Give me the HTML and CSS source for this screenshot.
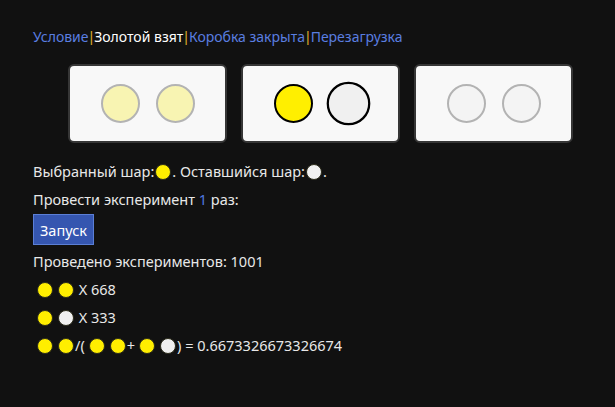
FILE: index.html
```html
<!DOCTYPE html>
<html lang="ru">
<head>
<meta charset="utf-8">
<title>Золотой взят</title>
<link rel="stylesheet" href="styles.css">
</head>
<body>
<nav class="nav"><a class="link" href="#">Условие</a><span class="sep">|</span><span class="current">Золотой взят</span><span class="sep">|</span><a class="link" href="#">Коробка закрыта</a><span class="sep">|</span><a class="link" href="#">Перезагрузка</a></nav>

<div class="boxes">
  <div class="box"><span class="ball ball-pale"></span><span class="ball ball-pale"></span></div>
  <div class="box"><span class="ball ball-gold"></span><span class="ball ball-silver ball-big"></span></div>
  <div class="box"><span class="ball ball-empty"></span><span class="ball ball-empty"></span></div>
</div>

<p class="line line-first">Выбранный шар:<span class="dot dot-y dot-tight"></span>. Оставшийся шар:<span class="dot dot-w dot-tight"></span>.</p>
<p class="line">Провести эксперимент <span class="count">1</span> раз:</p>
<button class="run">Запуск</button>
<p class="line">Проведено экспериментов: 1001</p>
<p class="line"><span class="dot dot-y"></span><span class="dot dot-y"></span> X 668</p>
<p class="line"><span class="dot dot-y"></span><span class="dot dot-w"></span> X 333</p>
<p class="line"><span class="dot dot-y"></span><span class="dot dot-y"></span>/(<span class="dot dot-y"></span><span class="dot dot-y"></span>+<span class="dot dot-y"></span><span class="dot dot-w"></span>) = 0.6673326673326674</p>
</body>
</html>
```

FILE: styles.css
```css
html, body {
  background: #111111;
}
body {
  margin: 0;
  padding: 25px 33px;
  font-family: "Noto Sans", "Open Sans", sans-serif;
  font-size: 14.5px;
  color: #e8e8e8;
}
.nav {
  line-height: 24px;
  white-space: nowrap;
  font-size: 14px;
}
.link {
  color: #5a7ee0;
  text-decoration: none;
}
.sep {
  color: #d9a92c;
  font-family: "Liberation Sans", sans-serif;
  margin: 0 1px;
}
.current {
  color: #ffffff;
}
.boxes {
  display: flex;
  gap: 14px;
  margin: 15px 0 0 35px;
}
.box {
  width: 155px;
  height: 75px;
  background: #f8f8f8;
  border: 2px solid #363636;
  border-radius: 6px;
  display: flex;
  align-items: center;
  justify-content: center;
}
.ball {
  width: 35px;
  height: 35px;
  border-radius: 50%;
  border: 2px solid #b3b3b3;
  margin: 0 8px;
  box-sizing: content-box;
}
.ball-pale {
  background: #f8f4b2;
}
.ball-empty {
  background: #f4f4f4;
}
.ball-gold {
  background: #ffef00;
  border-color: #000000;
}
.ball-silver {
  background: #f0f0f0;
  border-color: #000000;
}
.ball-big {
  transform: scale(1.12);
}
.line {
  margin: 0;
  line-height: 28px;
}
.line-first {
  margin-top: 14px;
}
.count {
  color: #4f78e0;
}
.run {
  display: block;
  height: 31px;
  padding: 0 6px;
  margin: 1px 0 2px;
  background: #3556b0;
  border: 1px solid #5b7fd6;
  color: #ffffff;
  font-family: "Noto Sans", "Open Sans", sans-serif;
  font-size: 14.5px;
}
.dot {
  display: inline-block;
  width: 16px;
  height: 16px;
  border-radius: 50%;
  vertical-align: -3px;
  margin: 0 1px 0 4px;
  box-sizing: border-box;
  border: 1px solid #2a2a1a;
}
.dot.dot-tight {
  margin: 0 1px;
}
.dot-y {
  background: #ffee00;
}
.dot-w {
  background: #f0f0f0;
}
```
